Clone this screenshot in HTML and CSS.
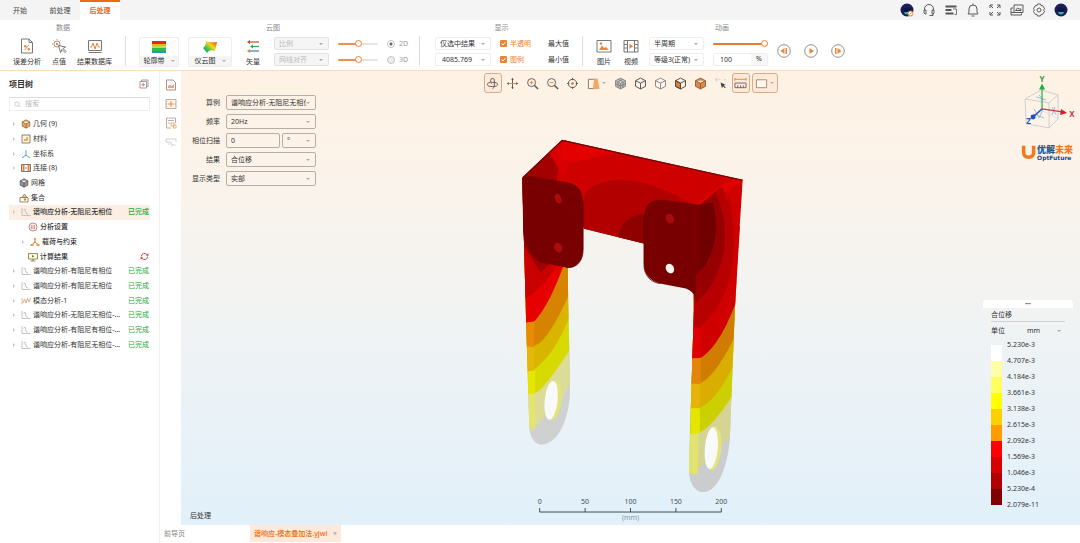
FILE: index.html
```html
<!DOCTYPE html>
<html lang="zh-CN">
<head>
<meta charset="utf-8">
<title>后处理</title>
<link rel="stylesheet" href="styles.css">
</head>
<body>
<svg class="sprite" aria-hidden="true">
  <symbol id="cube" viewBox="0 0 12 12"><path d="M6 1l4.6 2.4v5.2L6 11 1.400 8.600V3.400zM1.400 3.400L6 5.700l4.600-2.300M6 5.700V11"/></symbol>
  <symbol id="harm" viewBox="0 0 10 10"><path d="M1 1v7.500h8.500M2.500 3l1.500-1 1 4 1 1h1" fill="none" stroke="#b9b4b0" stroke-width=".8"/></symbol>
  <symbol id="user" viewBox="0 0 14 14"><circle cx="7" cy="7" r="6.500" fill="#17205c"/><path d="M2.500 6Q7 3 11.500 6L10 9H4z" fill="#10163f"/><path d="M4 9h6Q9.500 11.500 7 11.500T4 9z" fill="#3cae9c"/></symbol>
</svg>

<header class="topbar">
  <nav class="tabs">
    <a href="#start" class="tab">开始</a>
    <a href="#pre" class="tab">前处理</a>
    <a href="#post" class="tab active">后处理</a>
  </nav>
  <div class="top-icons">
    <button aria-label="助手"><svg viewBox="0 0 14 14"><use href="#user"/><circle cx="10.500" cy="10.500" r="2.500" fill="#fff" stroke="#f08030"/><path d="M9.500 11.500l2-2" stroke="#f08030"/></svg></button>
    <button aria-label="客服"><svg viewBox="0 0 14 14" class="line"><path d="M2.500 7V6a4.500 4.500 0 0 1 9 0v1M2 7h2v4H3L2 10zM12 7h-2v4h1l1-1zM11 11v1.500H7.500"/></svg></button>
    <button aria-label="任务"><svg viewBox="0 0 14 14"><path d="M1.500 2.500h11v2h-11zM1.500 6h6v2h-6zM1.500 9.500h8v2h-8z" fill="#555"/><path d="M9 6h3.500v5.500H10.500" fill="none" stroke="#777"/></svg></button>
    <button aria-label="通知"><svg viewBox="0 0 14 14" class="line"><path d="M2 11h10L11 9V6a4 4 0 0 0-8 0v3zM5.500 13h3M7 2V.5"/></svg></button>
    <button aria-label="全屏"><svg viewBox="0 0 14 14" class="line"><path d="M2 5V2h3M2 2l3 3M9 2h3v3M12 2L9 5M2 9v3h3M2 12l3-3M12 9v3H9M12 12L9 9"/></svg></button>
    <button aria-label="窗口"><svg viewBox="0 0 14 14" class="line"><path d="M4 2h9v7.500H4zM3 5H1v7h10.500v-1.500M5.500 7.500l2-2.500 1.500 1h2v1.500zM1 9.500h3"/></svg></button>
    <button aria-label="设置"><svg viewBox="0 0 14 14" class="line"><path d="M5.500 1h3l.5 1.500 1.700.2 1.800 2.800-.9 1.500.9 1.500-1.800 2.800-1.700.2-.5 1.500h-3L5 11.500l-1.700-.2-1.800-2.800.9-1.500-.9-1.500 1.800-2.800L5 2.500z"/><circle cx="7" cy="7" r="2"/></svg></button>
    <button aria-label="账户"><svg viewBox="0 0 14 14"><use href="#user"/></svg></button>
  </div>
</header>

<section class="ribbon">
  <div class="group g-data">
    <h2>数据</h2>
    <div class="group-body">
      <button class="tool"><svg viewBox="0 0 16 16"><path d="M2.500 1h7.500l3.500 3.500V15h-11zM10 1v3.500h3.500" fill="none" stroke="#777"/><path d="M5.500 12l4.500-5M5.500 7.500h1.500v1.500H5.500zM9 10.500h1.500V12H9z" fill="none" stroke="#e8853a"/></svg>误差分析</button>
      <button class="tool"><svg viewBox="0 0 16 16"><circle cx="6" cy="6" r="3" fill="none" stroke="#777" stroke-width=".8"/><circle cx="6" cy="6" r="1.200" fill="#e8853a"/><path d="M6 1v1M1 6h1M2.500 2.500l.7.7M9.500 2.500l-.7.7M2.500 9.500l.7-.7" stroke="#e8853a"/><path d="M7.500 7.500l2 7 1.500-3 3 3 1-1-3-3 2.500-1.500z" fill="#fff" stroke="#666" stroke-width=".9"/></svg>点值</button>
      <button class="tool"><svg viewBox="0 0 16 16"><path d="M1.500 2.500h13v10h-13zM1.500 14.500h13" fill="none" stroke="#777"/><path d="M3 9h1.500L6 5l2 6 2-6 1.500 4H13" fill="none" stroke="#e8853a"/></svg>结果数据库</button>
    </div>
  </div>
  <div class="group g-cloud">
    <h2>云图</h2>
    <div class="group-body">
      <button class="tool card"><svg viewBox="0 0 16 14"><path fill="#e02a1c" d="M1 1h14v3H1z"/><path fill="#f5b020" d="M1 4h14v2H1z"/><path fill="#c9dc2c" d="M1 6h14v2H1z"/><path fill="#35b84a" d="M1 8h14v3H1z"/><path fill="#19a0b8" d="M1 11h14v2H1z"/></svg><span>轮廓带<i class="caret"></i></span></button>
      <button class="tool card wide"><svg viewBox="0 0 16 14"><defs><linearGradient id="rb" x1="0" y1="1" x2="1" y2="0"><stop offset="0" stop-color="#1d8bd0"/><stop offset=".3" stop-color="#35c04a"/><stop offset=".6" stop-color="#f6d61c"/><stop offset="1" stop-color="#e3321c"/></linearGradient></defs><path d="M4 1Q8 3 15 2L13 11Q7 9 5 13L1 8Q4 6 4 1z" fill="url(#rb)"/></svg><span>仪云图<i class="caret"></i></span></button>
      <button class="tool"><svg viewBox="0 0 16 16"><path d="M4 4h10" stroke="#d8402a" stroke-width="1.200"/><path d="M5 2v4L2 4z" fill="#d8402a"/><path d="M7 8.500h7" stroke="#2fa85a" stroke-width="1.200"/><path d="M8 6.500v4L5 8.500z" fill="#2fa85a"/><path d="M4 13h10" stroke="#3a7cb8" stroke-width="1.200"/><path d="M5 11v4L2 13z" fill="#e8853a"/></svg>矢量</button>
      <div class="stack w55">
        <select class="sel off" aria-label="比例" disabled><option>比例</option></select>
        <select class="sel off" aria-label="网线对齐" disabled><option>网线对齐</option></select>
      </div>
      <div class="stack w40">
        <div class="cell"><input type="range" value="50" class="half" aria-label="比例值"></div>
        <div class="cell"><input type="range" value="50" class="half" aria-label="密度值"></div>
      </div>
      <div class="stack">
        <label class="cell muted"><input type="radio" name="dim" checked>2D</label>
        <label class="cell muted"><input type="radio" name="dim" disabled>3D</label>
      </div>
    </div>
  </div>
  <div class="group g-show">
    <h2>显示</h2>
    <div class="group-body">
      <div class="stack w56">
        <select class="sel" aria-label="结果范围"><option>仅选中结果</option></select>
        <select class="sel num" aria-label="数值"><option>4085.769</option></select>
      </div>
      <div class="stack">
        <label class="cell on"><input type="checkbox" checked>半透明</label>
        <label class="cell on"><input type="checkbox" checked>图例</label>
      </div>
      <div class="stack marks">
        <button class="cell">最大值</button>
        <button class="cell">最小值</button>
      </div>
    </div>
  </div>
  <div class="group g-anim">
    <h2>动画</h2>
    <div class="group-body">
      <button class="tool"><svg viewBox="0 0 16 16"><path d="M1 2.500h14v11.500H1z" fill="none" stroke="#777"/><path d="M3 12l3-4.500 2 2.500 2-1 3 3z" fill="#e8853a"/><circle cx="5" cy="5.500" r="1.200" fill="#e8853a"/></svg>图片</button>
      <button class="tool"><svg viewBox="0 0 16 16"><path d="M1 2.500h14v11.500H1zM4.500 2.500V14M11.500 2.500V14M1 6.500h3.500M1 10h3.500M11.500 6.500H15M11.500 10H15" fill="none" stroke="#777"/><path d="M6.500 5.500l3.500 2.700-3.500 2.700z" fill="#e8853a"/></svg>视频</button>
      <div class="stack w55">
        <select class="sel" aria-label="周期"><option>半周期</option></select>
        <select class="sel" aria-label="等级"><option>等级3(正常)</option></select>
      </div>
      <div class="stack w55">
        <div class="cell"><input type="range" value="100" class="full" aria-label="进度"></div>
        <label class="unit"><input type="text" value="100" aria-label="百分比"><span>%</span></label>
      </div>
      <div class="players">
        <button aria-label="上一帧"><svg viewBox="0 0 14 14"><circle cx="7" cy="7" r="6.300" fill="#fff" stroke="#8c8078" stroke-width=".9"/><path d="M7.500 4v6L3.500 7zM8.500 4h1.500v6H8.500z" fill="#e8853a"/></svg></button>
        <button aria-label="播放"><svg viewBox="0 0 14 14"><circle cx="7" cy="7" r="6.300" fill="#fff" stroke="#8c8078" stroke-width=".9"/><path d="M5.500 4l4.500 3-4.500 3z" fill="#e8853a"/></svg></button>
        <button aria-label="下一帧"><svg viewBox="0 0 14 14"><circle cx="7" cy="7" r="6.300" fill="#fff" stroke="#8c8078" stroke-width=".9"/><path d="M6.500 4v6l4-3zM4 4h1.500v6H4z" fill="#e8853a"/></svg></button>
      </div>
    </div>
  </div>
</section>

<main class="work">
  <aside class="side">
    <div class="side-head"><h1>项目树</h1><button aria-label="收起"><svg viewBox="0 0 10 10"><path d="M2.500 2.500V1h6.500v6.500H7.500M1 2.500h6.500V9H1z" fill="none" stroke="#888" stroke-width=".8"/><path d="M4.200 4v3.500M2.500 5.700h3.500" stroke="#e06030" stroke-width=".8"/></svg></button></div>
    <label class="search"><svg viewBox="0 0 8 8"><circle cx="3.500" cy="3.500" r="2.500" fill="none" stroke="#bbb" stroke-width=".8"/><path d="M5.500 5.500L7.500 7.500" stroke="#bbb" stroke-width=".8"/></svg><input type="text" placeholder="搜索" aria-label="搜索"></label>
    <ul class="tree">
      <li class="exp"><svg viewBox="0 0 12 12" stroke="#7a4a20" stroke-width=".7" fill="#e9a866"><use href="#cube"/></svg><b>几何 (9)</b></li>
      <li class="exp"><svg viewBox="0 0 10 10"><path d="M1 1h8v8H1z" fill="#fff4dc" stroke="#6f6658" stroke-width=".8"/><path d="M3 7V5h2V3h2v4z" fill="#e7b25c"/></svg><b>材料</b></li>
      <li class="exp"><svg viewBox="0 0 10 10" fill="none"><path d="M5 6V1" stroke="#42b8a0"/><path d="M5 6L1 9" stroke="#5a8ad0"/><path d="M5 6l4 3" stroke="#42b8a0"/></svg><b>坐标系</b></li>
      <li class="exp"><svg viewBox="0 0 10 10"><path d="M.5 1.500h9v7h-9z" fill="#fff" stroke="#555" stroke-width=".8"/><path d="M1.500 2h2v6h-2zM6.500 2h2v6h-2zM4 4.500h2v1H4z" fill="#d98845"/></svg><b>连接 (8)</b></li>
      <li><svg viewBox="0 0 12 12" stroke="#444" stroke-width=".8" fill="#999"><use href="#cube"/></svg><b>网格</b></li>
      <li><svg viewBox="0 0 10 10"><path d="M1 4.500h8V9H1z" fill="#fff" stroke="#8a6a48" stroke-width=".8"/><path d="M3 4.500L5.500 1 8 4.500z" fill="#f3c394" stroke="#8a6a48" stroke-width=".7"/><circle cx="6" cy="6.500" r="1.200" fill="#e8853a"/></svg><b>集合</b></li>
      <li class="exp cur"><svg viewBox="0 0 10 10"><use href="#harm"/></svg><b>谐响应分析-无阻尼无相位</b><em>已完成</em></li>
      <li class="sub"><svg viewBox="0 0 10 10"><circle cx="5" cy="5" r="4" fill="#fdf0ec" stroke="#9a7a72" stroke-width=".8"/><path d="M3.500 3v4M5 3v4M6.500 3v4" stroke="#d07a60" stroke-width=".7"/></svg><b>分析设置</b></li>
      <li class="exp sub"><svg viewBox="0 0 10 10"><path d="M5 1.500V5M5 5L2 7.500M5 5l3 2.500" stroke="#c98030" fill="none"/><path d="M4 1h2v2H4zM.5 7h3v2h-3zM6.500 7h3v2h-3z" fill="#e8a050"/></svg><b>载荷与约束</b></li>
      <li class="sub"><svg viewBox="0 0 10 10"><path d="M.5 1.500h9v5.500h-9zM2.500 9h5M5 7v2" fill="#fffbe0" stroke="#7a7440" stroke-width=".8"/><path d="M4 3l2.500 1.300L4 5.500z" fill="#4a8a40"/></svg><b>计算结果</b><svg class="sync" viewBox="0 0 10 10"><path d="M1.500 5A3.500 3.500 0 0 1 7.800 2.900M8.500 5A3.500 3.500 0 0 1 2.200 7.100" fill="none" stroke="#e0323c"/><path d="M9.300 1.500v3L6.500 3.500zM.7 8.500v-3l2.800 1z" fill="#e0323c"/></svg></li>
      <li class="exp"><svg viewBox="0 0 10 10"><use href="#harm"/></svg><b>谐响应分析-有阻尼有相位</b><em>已完成</em></li>
      <li class="exp"><svg viewBox="0 0 10 10"><use href="#harm"/></svg><b>谐响应分析-有阻尼无相位</b><em>已完成</em></li>
      <li class="exp"><svg viewBox="0 0 10 10" fill="none"><path d="M1 2v6" stroke="#d0a888" stroke-width=".8"/><path d="M2 7l1.500-4L5 7l1.500-4.500L8 6l1.500-4" stroke="#d99a68" stroke-width=".8"/></svg><b>模态分析-1</b><em>已完成</em></li>
      <li class="exp"><svg viewBox="0 0 10 10"><use href="#harm"/></svg><b>谐响应分析-无阻尼无相位-...</b><em>已完成</em></li>
      <li class="exp"><svg viewBox="0 0 10 10"><use href="#harm"/></svg><b>谐响应分析-有阻尼有相位-...</b><em>已完成</em></li>
      <li class="exp"><svg viewBox="0 0 10 10"><use href="#harm"/></svg><b>谐响应分析-有阻尼无相位-...</b><em>已完成</em></li>
    </ul>
  </aside>

  <div class="stage">
    <div class="stage-row">
      <div class="strip">
        <button aria-label="报告"><svg viewBox="0 0 12 12"><path d="M1.500 1h6.500l2.500 2.500V11h-9z" fill="#fff" stroke="#8c7c74" stroke-width=".8"/><path d="M3 9V7l2-1.500L7 7l2-2v4z" fill="#eda27a"/></svg></button>
        <button aria-label="表格"><svg viewBox="0 0 12 12"><path d="M1 1.500h10v9H1z" fill="#fff6ee" stroke="#a8988c" stroke-width=".8"/><path d="M6 3v6M3 6h6M1 6h1M10 6h1" stroke="#e8853a" stroke-width=".9"/></svg></button>
        <button aria-label="列表"><svg viewBox="0 0 12 12"><path d="M10.500 6V1h-9v10H6M3 3.500h6M3 6h2" fill="none" stroke="#a8988c" stroke-width=".8"/><path d="M6 6h3v3H6zM8.500 8h2.500v3H8.500z" fill="#fff" stroke="#e8a868" stroke-width=".9"/></svg></button>
        <button aria-label="探针"><svg viewBox="0 0 12 12"><path d="M1 3h10v3M1 3v3h5M6 6l1 4 1.500-2 2 2M3 8h2" fill="none" stroke="#ccc" stroke-width=".9"/></svg></button>
      </div>

      <div class="viewport">
        <svg class="scene" viewBox="181 70 899 455" preserveAspectRatio="xMidYMid meet">
          <defs>
            <clipPath id="armL"><path d="M522 177L567 200 568 300 570 388C570 412 561 444 541 444.500 534 444 529 436 529 425L526 325z"/></clipPath>
            <clipPath id="armR"><path d="M694 240L743 179 735 310 730 440C728 462 720 491 704 492 694 492 689 482 689 468L694 310z"/></clipPath>
            <clipPath id="back"><path d="M562 139L743 179 735 300H694L694 290 644 243 584 228 522 177z"/></clipPath>
          </defs>
          <g clip-path="url(#armL)">
            <path fill="#cfd0d0" d="M515 170h60v280h-60z"/>
            <path fill="#dcdc98" d="M515 170h60v200Q560 410 546 414 534 430 529 432L515 434z"/>
            <path fill="#d6da00" d="M515 170h60V340Q560 366 545 384 538 394 529 394L515 393z"/>
            <path fill="#d9b500" d="M515 170h60V300Q562 342 542 362 534 371 528 371L515 371z"/>
            <path fill="#d68400" d="M515 170h60V280Q554 330 540 342 534 347 526 346H515z"/>
            <path fill="#e60000" d="M515 170h60V230Q554 300 534 321 530 323 515 322z"/>
            <path fill="#c80000" d="M515 170h60V230Q550 285 525 298L515 298z"/>
            <path fill="#a00000" d="M515 170h60V240L540 272 523 244H515z"/>
            <path d="M526 322L534 321 534 347 527 346z" fill="#e88a06"/>
            <path d="M527 346l7 1v24l-6 0z" fill="#e6b608"/>
            <path d="M528 371l7-1v23l-7 1z" fill="#e6e600"/>
            <path d="M528 394l7-1v35l-6-3z" fill="#e4e470"/>
          </g>
          <ellipse cx="553" cy="400" rx="8.500" ry="20" transform="rotate(6 553 400)" fill="#e3e37c"/>
          <ellipse cx="551" cy="400" rx="6.500" ry="19.500" transform="rotate(6 551 400)" fill="#f7f9fa"/>
          <g clip-path="url(#back)">
            <path fill="#cf0000" d="M515 130h235v180H515z"/>
            <path fill="#a40000" d="M562 139L556 184 522 177z"/>
            <path fill="#d80000" d="M562 139L571 158 564 178 548 150z"/>
            <path fill="#e50000" d="M562 139L618 152Q596 155 574 161L560 158z"/>
            <path fill="#b20000" d="M584 196C590 178 628 175 655 186 678 194 694 204 699 208V260H584z"/>
            <path fill="#8f0000" d="M618 236C620 216 640 211 655 215V245H622z"/>
            <path fill="#e30000" d="M722 184L736 178 743 179 728 190 694 205z"/>
            <path fill="#b50000" d="M699 205L722 185C734 215 732 270 700 300H690z"/>
            <path fill="#960000" d="M699 205L715 192C733 225 725 265 699 278z"/>
          </g>
          <path d="M522.500 177L562 139.500 743 179.500" fill="none" stroke="#650808" stroke-width="1.200"/>
          <g clip-path="url(#armR)">
            <path fill="#cbcccd" d="M685 300h60v200h-60z"/>
            <path fill="#d4d494" d="M685 295h60V420Q730 440 712 452 700 474 685 474z"/>
            <path fill="#cdd000" d="M685 295h60V375Q718 422 702 431 697 434 685 433z"/>
            <path fill="#d9ae00" d="M685 295h60V340Q722 396 703 406 698 409 685 408z"/>
            <path fill="#d07c00" d="M685 280h60V315Q720 372 702 382 697 385 685 383z"/>
            <path fill="#d00000" d="M685 280L745 220V275Q726 340 702 357 698 359 685 358z"/>
            <path fill="#b80000" d="M690 260L728 190Q750 290 694 332z"/>
            <path fill="#970000" d="M694 240L715 192C733 225 728 275 696 302z"/>
            <path d="M693 325l8 4v28l-9 1z" fill="#e10000"/>
            <path d="M692 358l9 0v26l-9-1z" fill="#e48408"/>
            <path d="M692 383l8 1v24l-9 0z" fill="#e7b307"/>
            <path d="M691 408l9 0v25l-9 1z" fill="#e5e600"/>
            <path d="M690 434l9-1-1 42-9-2z" fill="#e2e270"/>
          </g>
          <ellipse cx="713.500" cy="448" rx="8" ry="22" transform="rotate(5 713 448)" fill="#e3e37c"/>
          <ellipse cx="711.500" cy="448" rx="6.500" ry="21" transform="rotate(5 711 448)" fill="#f7f9fa"/>
          <path fill="#780000" d="M522 177L530 175 569 182C578 184 583 191 583 202V249C583 261 576 268 566 267L541 262C530 257 524 244 523 230z"/>
          <path fill="#780000" d="M644 217C644 204 652 198 663 199L699 204 713 202Q722 235 706 264L696 275V298Q694 291 686 288L660 283C650 280 644 274 644 264z"/>
          <path fill="#700000" d="M699 204l14-2q8 35-7 62l-7 6z"/>
          <path d="M583 200V249C583 261 576 268 566 267M644 216V264C644 276 652 282 660 283" fill="none" stroke="#5c0404" stroke-width=".8"/>
          <g fill="#a80c0c"><ellipse cx="558" cy="198" rx="3" ry="5" transform="rotate(-20 558 198)"/><ellipse cx="558" cy="247" rx="4" ry="5" transform="rotate(-25 558 247)"/><ellipse cx="670" cy="218" rx="4" ry="5" transform="rotate(-30 670 218)"/></g>
          <ellipse cx="670" cy="268" rx="4" ry="5" transform="rotate(-30 670 268)" fill="#f7f5f2"/>

          <g fill="none" stroke="#c3c4cc" stroke-width=".8"><path d="M1026 98l24 4v25l-23-4zM1026 98l16-9 17 5-9 8M1059 94v24l-9 9"/><path d="M1042 89v20l17 9M1042 109l-15 14" stroke="#dcdce0"/></g>
          <path d="M1037 96l10 3M1040 94l4 5M1035 108l5 9 4-9M1034 113l11 4M1053 106l4 8M1056 106l-3 8" fill="none" stroke="#9bb4d2" stroke-width=".9"/>
          <path d="M1043 108V87" stroke="#2fb24a" stroke-width="1.200"/><path d="M1040 88.500l3-6 3 6z" fill="#1fae3c"/>
          <path d="M1043 108l20 3" stroke="#c43a48" stroke-width="1.200"/><path d="M1062 108l6 4-7 2z" fill="#cc2030"/>
          <path d="M1043 108l-9 8" stroke="#2a60c8" stroke-width="1.500"/><circle cx="1034" cy="116" r="2.500" fill="#1d4fc0"/>
          <text x="1043" y="81" class="ax" fill="#2a9a40">Y</text><text x="1073" y="116" class="ax" fill="#c43a48">X</text><text x="1029.500" y="123" class="ax" fill="#2458b8">Z</text>

          <path d="M1024.500 145v6.500q0 5 5 5t5-5V145" fill="none" stroke="#f07a1c" stroke-width="3.500"/>
          <text x="1038" y="152" class="brand" fill="#1d5a96">优解<tspan fill="#f07a1c">未来</tspan></text>
          <text x="1038" y="159" class="brand-sub" fill="#1d4a7a">OptFuture</text>

          <path d="M539.500 508v4h182v-4M585 508v4M630.500 508v4M676 508v4" fill="none" stroke="#3c4d5a"/>
          <g class="ruler"><text x="539.500" y="504">0</text><text x="585" y="504">50</text><text x="630.500" y="504">100</text><text x="676" y="504">150</text><text x="721.500" y="504">200</text><text x="630.500" y="520" fill="#8a98a2">(mm)</text></g>
        </svg>

        <div class="viewtools">
          <button class="boxed" aria-label="旋转"><svg viewBox="0 0 14 14" class="line"><ellipse cx="7" cy="8" rx="5.500" ry="2.300"/><path d="M5 6V3.500a2 2 0 0 1 4 0V9q0 3-2 3.500"/><path d="M4.500 5.500L7 8" stroke="#e8853a"/></svg></button>
          <button aria-label="平移"><svg viewBox="0 0 14 14"><path d="M7 1.500v11" stroke="#555"/><path d="M1.500 7h11" stroke="#e8853a"/><path d="M5.500 3L7 1l1.500 2zM5.500 11L7 13l1.500-2z" fill="#555"/><path d="M3 5.500L1 7l2 1.500zM11 5.500L13 7l-2 1.500z" fill="#555"/></svg></button>
          <button aria-label="放大"><svg viewBox="0 0 14 14" class="line"><circle cx="6" cy="6" r="4.300"/><path d="M9.200 9.200L13 13" stroke-width="1.600"/><path d="M4 6h4M6 4v4" stroke="#e8853a"/></svg></button>
          <button aria-label="缩小"><svg viewBox="0 0 14 14" class="line"><circle cx="6" cy="6" r="4.300"/><path d="M9.200 9.200L13 13" stroke-width="1.600"/><path d="M4 6h4" stroke="#e8853a"/></svg></button>
          <button aria-label="适应窗口"><svg viewBox="0 0 14 14" class="line"><circle cx="7" cy="7" r="4.500"/><path d="M7 1v2.500M7 10.500V13M1 7h2.500M10.500 7H13"/><circle cx="7" cy="7" r="1.500" fill="#e8853a" stroke="none"/></svg></button>
          <button class="menu" aria-label="剖切"><svg viewBox="0 0 14 14"><path d="M1.500 2.500h9v10h-9z" fill="none" stroke="#777"/><path d="M7.500 2h4l2 11h-7z" fill="#f3a765"/></svg><i class="caret"></i></button>
          <button aria-label="网格"><svg viewBox="0 0 12 12" stroke="#777" stroke-width=".7" fill="#bbb"><use href="#cube"/><path fill="none" d="M3.700 2.200l4.600 2.400v5.200M8.300 2.200L3.700 4.600v5.200M1.400 6L6 8.400 10.600 6"/></svg></button>
          <button aria-label="线框"><svg viewBox="0 0 12 12" stroke="#555" stroke-width=".9" fill="none"><use href="#cube"/></svg></button>
          <button aria-label="实体"><svg viewBox="0 0 12 12" stroke="#777" stroke-width=".8" fill="#fff8f0"><use href="#cube"/></svg></button>
          <button aria-label="面边"><svg viewBox="0 0 12 12" stroke="#5a4a40" stroke-width=".9" fill="none"><path d="M1.400 3.400L6 5.700V11L1.400 8.600z" fill="#d98038"/><use href="#cube"/></svg></button>
          <button aria-label="着色"><svg viewBox="0 0 12 12" stroke="#8a5028" stroke-width=".8" fill="#e08a4a"><use href="#cube"/></svg></button>
          <button aria-label="选择"><svg viewBox="0 0 14 14"><path d="M1 3h2M5 3h2M11 3h2M3 1v4" stroke="#cfc4ba"/><path d="M7 6l1.500 6 1.300-2 2 2 .8-.8-2-2 1.900-.9z" fill="#444"/></svg></button>
          <button class="boxed" aria-label="标尺"><svg viewBox="0 0 14 14"><path d="M1 2.500h12M1 1v3M13 1v3" stroke="#e8853a"/><path d="M1 6.500h12v5H1zM4 9v2.500M7 9v2.500M10 9v2.500" fill="none" stroke="#666"/></svg></button>
          <button class="boxed menu" aria-label="窗口"><svg viewBox="0 0 14 14"><path d="M1.500 3h11v8.500h-11z" fill="#fff8f0" stroke="#b08468"/></svg><i class="caret"></i></button>
        </div>

        <form class="params">
          <label for="p1">算例</label><select id="p1" class="field"><option>谐响应分析-无阻尼无相位</option></select>
          <label for="p2">频率</label><select id="p2" class="field"><option>20Hz</option></select>
          <label for="p3">相位扫描</label><div class="pair"><input id="p3" type="text" value="0" class="field"><select class="field" aria-label="角度单位"><option>°</option></select></div>
          <label for="p4">结果</label><select id="p4" class="field"><option>合位移</option></select>
          <label for="p5">显示类型</label><select id="p5" class="field"><option>实部</option></select>
        </form>

        <div class="legend">
          <div class="grip">•••</div>
          <div class="legend-body">
            <h3>合位移</h3>
            <label class="unit-row">单位<select aria-label="单位"><option>mm</option></select></label>
            <div class="scale">
              <div class="bar"><i class="c1"></i><i class="c2"></i><i class="c3"></i><i class="c4"></i><i class="c5"></i><i class="c6"></i><i class="c7"></i><i class="c8"></i><i class="c9"></i><i class="c10"></i></div>
              <ol><li>5.230e-3</li><li>4.707e-3</li><li>4.184e-3</li><li>3.661e-3</li><li>3.138e-3</li><li>2.615e-3</li><li>2.092e-3</li><li>1.569e-3</li><li>1.046e-3</li><li>5.230e-4</li><li>2.079e-11</li></ol>
            </div>
          </div>
        </div>
        <span class="mode">后处理</span>
      </div>
    </div>
    <footer class="files">
      <a href="#guide" class="file">前导页</a>
      <span class="file active"><a href="#file">谐响应-模态叠加法.yjwl</a><button aria-label="关闭">×</button></span>
    </footer>
  </div>
</main>
</body>
</html>
```

FILE: styles.css
```css
* { box-sizing: border-box; margin: 0; padding: 0; }

html, body { height: 100%; }

body {
  display: flex;
  flex-direction: column;
  font: 7px/10px "Noto Sans", "Noto Sans CJK SC", sans-serif;
  color: #333;
  background: #fff;
}

button, input, select { font: inherit; color: inherit; border: 0; background: none; border-radius: 0; outline: 0; }
button { cursor: pointer; }
a { color: inherit; text-decoration: none; }
h1, h2, h3, b, em, i { font-weight: inherit; font-style: normal; font-size: inherit; }
ul, ol { list-style: none; }
svg { display: block; flex: none; }
select { appearance: none; }
.sprite { position: absolute; width: 0; height: 0; }
.line { fill: none; stroke: #5a5a5a; stroke-width: 1; }

.caret {
  display: inline-block;
  border: 2px solid transparent;
  border-top-color: #b5b0ac;
  border-bottom: 0;
}

/* top bar */
.topbar { display: flex; justify-content: space-between; flex: none; height: 20px; background: #f4f4f4; }
.tabs { display: flex; }
.tab { display: flex; align-items: center; justify-content: center; width: 40px; border-top: 2px solid transparent; color: #444; }
.tab.active { background: #fff; border-color: #ec6a10; color: #ec6a10; font-weight: 700; }
.top-icons { display: flex; align-items: center; gap: 8px; padding-right: 12px; }
.top-icons svg { width: 14px; height: 14px; }

/* ribbon */
.ribbon { display: flex; flex: none; height: 51px; border-bottom: 1px solid #fbdcc0; background: #fff; }
.group { display: flex; flex-direction: column; }
.group h2 { text-align: center; height: 16px; line-height: 15px; color: #8a8a8a; }
.group-body { display: flex; align-items: flex-start; height: 30px; padding-top: 1px; }
.g-data { width: 126px; }
.g-cloud { width: 294px; }
.g-show { width: 163px; }
.g-anim { width: 278px; }
.g-data .group-body { padding-left: 13px; gap: 10px; border-right: 1px solid #ddd; }
.g-cloud .group-body { padding-left: 13px; gap: 9px; border-right: 1px solid #ddd; }
.g-show .group-body { padding-left: 15px; gap: 9px; border-right: 1px solid #ddd; }
.g-anim .group-body { padding-left: 12px; gap: 9px; }

.tool { display: flex; flex-direction: column; align-items: center; gap: 3px; padding-top: 1px; white-space: nowrap; }
.tool svg { width: 16px; height: 16px; }
.g-data .tool:nth-child(2) { width: 16px; }
.card { width: 40px; height: 30px; padding: 0; gap: 0; border: 1px solid #eee; border-radius: 2px; }
.card.wide { width: 44px; }
.card svg { height: 14px; margin: 2px 0; }
.card span { display: flex; align-items: center; justify-content: center; gap: 6px; width: 100%; background: #f5f5f5; }
.g-cloud .tool:nth-child(3) { padding-left: 4px; padding-right: 4px; }
.g-anim .tool { width: 18px; }

.stack { display: grid; grid-template-columns: minmax(0, 1fr); grid-auto-rows: 13px; gap: 3px; flex: none; }
.w40 { width: 40px; }
.w55 { width: 55px; }
.w56 { width: 56px; }
.cell { display: flex; align-items: center; gap: 4px; white-space: nowrap; }
.sel {
  width: 100%;
  padding: 0 4px;
  border: 1px solid #eee;
  border-radius: 2px;
  background: url("data:image/svg+xml,%3Csvg xmlns='http://www.w3.org/2000/svg' width='4' height='2'%3E%3Cpath d='M0 0h4L2 2z' fill='%23aaa'/%3E%3C/svg%3E") right 5px center no-repeat #fff;
}
.sel.off { background-color: #f5f5f5; border-color: #e2e2e2; color: #bbb; opacity: 1; }
.sel.num { padding-left: 6px; }
.muted { color: #999; }
.on { color: #ee8230; gap: 3px; }
.marks { margin-left: 8px; }

input[type="range"] { appearance: none; width: 100%; min-width: 0; height: 8px; }
input[type="range"]::-webkit-slider-runnable-track { height: 2px; border-radius: 1px; background: #e77c31; }
.half::-webkit-slider-runnable-track { background: linear-gradient(90deg, #f19149 50%, #e5e5e5 50%) !important; }
input[type="range"]::-webkit-slider-thumb { appearance: none; width: 7px; height: 7px; margin-top: -3px; border: 1px solid #ea8138; border-radius: 50%; background: #fff; }
input[type="radio"] { appearance: none; width: 8px; height: 8px; border: 1px solid #c4c4c4; border-radius: 50%; }
input[type="radio"]:checked { background: radial-gradient(#666 0 1px, #fff 2px); }
input[type="radio"]:disabled { background: #eee; }
input[type="checkbox"] {
  appearance: none;
  width: 7px;
  height: 7px;
  border-radius: 1px;
  background: url("data:image/svg+xml,%3Csvg xmlns='http://www.w3.org/2000/svg' viewBox='0 0 7 7'%3E%3Cpath d='M1.500 3.500L3 5l2.500-3' fill='none' stroke='%23fff'/%3E%3C/svg%3E") #ee8230;
}

.unit { display: flex; border: 1px solid #eee; border-radius: 2px; }
.unit input { flex: 1; min-width: 0; padding-left: 6px; }
.unit span { flex: none; width: 16px; text-align: center; background: #f7f7f7; }
.players { display: flex; align-items: center; gap: 13px; height: 28px; }
.players svg { width: 14px; height: 14px; }

/* project tree */
.work { display: grid; grid-template-columns: 160px 1fr; flex: 1; min-height: 0; }
.side { padding: 5px 9px 0; border-right: 1px solid #f1f1f1; }
.side-head { display: flex; align-items: center; justify-content: space-between; height: 16px; padding-right: 1px; }
.side-head h1 { font-size: 8px; font-weight: 700; }
.side-head svg { width: 10px; height: 10px; }
.search { display: flex; align-items: center; gap: 4px; height: 14px; margin: 5px 0 6px; padding: 0 4px; border: 1px solid #eee; border-top-color: #ddd; }
.search svg { width: 7px; height: 7px; }
.search input { flex: 1; min-width: 0; }
::placeholder { color: #bbb; }
.tree { display: grid; grid-auto-rows: 1fr; height: 235px; }
.tree li { display: flex; align-items: center; gap: 2px; padding: 0 1px 0 4px; white-space: nowrap; }
.tree li::before { content: ""; flex: none; width: 2px; margin-right: 2px; }
.tree li.exp::before { border: 2px solid transparent; border-left-color: #c5c5c5; border-right: 0; }
.tree svg { width: 10px; height: 10px; }
.tree b { flex: 1; }
.tree em { color: #1fa83c; }
.tree .sub { padding-left: 13px; font-weight: 500; }
.tree .cur { background: #fdeee4; font-weight: 500; }
.tree .sync { width: 9px; height: 9px; }

/* stage */
.stage { display: flex; flex-direction: column; min-width: 0; }
.stage-row { display: flex; flex: 1; min-height: 0; }
.strip { display: flex; flex-direction: column; align-items: center; gap: 7px; width: 21px; padding-top: 8px; }
.strip svg { width: 12px; height: 12px; }
.viewport { position: relative; flex: 1; min-width: 0; overflow: hidden; background: linear-gradient(#fff2e4 0%, #fbf3ea 22%, #f2f3f2 50%, #eaf2f7 75%, #e1f0fa 100%); }
.scene { position: absolute; inset: 0; width: 100%; height: 100%; }
.ax { font: 700 8px "Noto Sans", sans-serif; text-anchor: middle; }
.brand { font: 900 9px "Noto Sans CJK SC", sans-serif; }
.brand-sub { font: 700 6px "DejaVu Sans", sans-serif; }
.ruler { font-size: 7px; text-anchor: middle; fill: #3c4d5a; }

.viewtools { position: absolute; top: 2px; left: 0; right: 0; display: flex; justify-content: center; gap: 2px; }
.viewtools button { display: flex; align-items: center; justify-content: center; width: 18px; height: 20px; border: 1px solid transparent; border-radius: 3px; }
.viewtools svg { width: 13px; height: 13px; }
.viewtools .menu { gap: 2px; width: 26px; }
.viewtools .boxed { border-color: #d9a988; background: #fdeadb; }

.params { position: absolute; top: 24px; left: 10px; display: grid; grid-template-columns: 29px 90px; grid-auto-rows: 15px; gap: 4px 6px; align-items: center; }
.params label { text-align: right; white-space: nowrap; }
.field { width: 100%; min-width: 0; height: 15px; padding: 0 9px 0 4px; border: 1px solid #b9aea5; border-radius: 2px; }
input.field { padding-right: 2px; }
select.field { background: url("data:image/svg+xml,%3Csvg xmlns='http://www.w3.org/2000/svg' width='4' height='2'%3E%3Cpath d='M0 0h4L2 2z' fill='%23b5aca4'/%3E%3C/svg%3E") right 5px center no-repeat; }
.pair { display: grid; grid-template-columns: 54px 1fr; gap: 2px; }

.legend { position: absolute; right: 7px; bottom: 14px; width: 90px; }
.grip { height: 8px; border-radius: 4px 4px 0 0; background: #fff; text-align: center; font-size: 5px; line-height: 8px; }
.legend-body { padding: 1px 8px 0; }
.legend-body h3 { height: 13px; line-height: 12px; border-bottom: 1px solid #d0d2d2; }
.unit-row { display: flex; align-items: center; height: 18px; gap: 22px; }
.unit-row select { flex: 1; background: url("data:image/svg+xml,%3Csvg xmlns='http://www.w3.org/2000/svg' width='4' height='2'%3E%3Cpath d='M0 0h4L2 2z' fill='%23aaa'/%3E%3C/svg%3E") right 4px center no-repeat; }
.scale { display: flex; gap: 5px; }
.bar { display: grid; grid-auto-rows: 16px; width: 11px; padding: 5px 0 6px; }
.scale ol { display: grid; grid-auto-rows: 16px; line-height: 10px; height: 171px; }
.c1 { background: #fff; }
.c2 { background: #ffffa8; }
.c3 { background: #ffff60; }
.c4 { background: #ff0; }
.c5 { background: #ffd000; }
.c6 { background: #ff9c00; }
.c7 { background: #f00; }
.c8 { background: #d80000; }
.c9 { background: #b00000; }
.c10 { background: #800000; }
.mode { position: absolute; left: 9px; bottom: 4px; }

/* open files */
.files { display: flex; flex: none; gap: 3px; height: 18px; padding-bottom: 1px; background: #fff; }
.file { display: flex; align-items: center; width: 87px; padding: 0 4px; color: #888; }
.file.active { justify-content: space-between; width: 91px; background: #fdeadb; color: #ec6a10; font-weight: 500; }
.file.active button { color: #999; }
```
